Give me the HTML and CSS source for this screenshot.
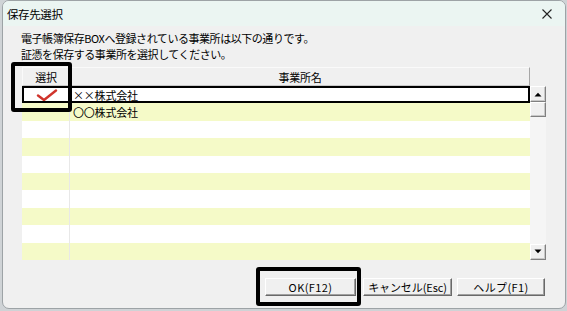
FILE: index.html
```html
<!DOCTYPE html>
<html lang="ja">
<head>
<meta charset="utf-8">
<link rel="stylesheet" href="styles.css">
</head>
<body>
<div class="window">
  <div class="titlebar">
    <span class="title">保存先選択</span>
    <svg class="close" width="12" height="12" viewBox="0 0 12 12"><path d="M1.5 1.5 L10.5 10.5 M10.5 1.5 L1.5 10.5" stroke="#222" stroke-width="1.1" fill="none"/></svg>
  </div>
  <div class="content">
    <div class="message">
      <div>電子帳簿保存BOXへ登録されている事業所は以下の通りです。</div>
      <div>証憑を保存する事業所を選択してください。</div>
    </div>
    <div class="grid">
      <div class="ghead">
        <div class="hcell c1">選択</div>
        <div class="hcell c2">事業所名</div>
      </div>
      <div class="gbody">
        <div class="rows">
          <div class="row sel">
            <div class="cell c1">
              <svg width="22" height="12" viewBox="0 0 22 12"><path d="M2 6.5 L8 11 L20 1.5" stroke="#d0342c" stroke-width="2.4" fill="none" stroke-linecap="round" stroke-linejoin="round"/></svg>
            </div>
            <div class="cell c2">××株式会社</div>
          </div>
          <div class="row alt"><div class="cell c1"></div><div class="cell c2">〇〇株式会社</div></div>
          <div class="row"><div class="cell c1"></div><div class="cell c2"></div></div>
          <div class="row alt"><div class="cell c1"></div><div class="cell c2"></div></div>
          <div class="row"><div class="cell c1"></div><div class="cell c2"></div></div>
          <div class="row alt"><div class="cell c1"></div><div class="cell c2"></div></div>
          <div class="row"><div class="cell c1"></div><div class="cell c2"></div></div>
          <div class="row alt"><div class="cell c1"></div><div class="cell c2"></div></div>
          <div class="row"><div class="cell c1"></div><div class="cell c2"></div></div>
          <div class="row alt"><div class="cell c1"></div><div class="cell c2"></div></div>
        </div>
        <div class="vscroll">
          <div class="sbtn"><svg width="8" height="5" viewBox="0 0 8 5"><path d="M0.5 4.5 L4 0.8 L7.5 4.5 Z" fill="#000"/></svg></div>
          <div class="thumb"></div>
          <div class="track"></div>
          <div class="sbtn"><svg width="8" height="5" viewBox="0 0 8 5"><path d="M0.5 0.5 L4 4.2 L7.5 0.5 Z" fill="#000"/></svg></div>
        </div>
      </div>
    </div>
    <div class="buttons">
      <div class="btn ok">OK(F12)</div>
      <div class="btn cancel">キャンセル(Esc)</div>
      <div class="btn help">ヘルプ(F1)</div>
    </div>
  </div>
  <div class="mark mark-sel"></div>
  <div class="mark mark-ok"></div>
</div>
</body>
</html>
```

FILE: styles.css
```css
html, body {
  margin: 0;
  padding: 0;
}
body {
  width: 567px;
  height: 311px;
  background: #cfd3d6;
  font-family: "Noto Sans CJK JP", "Noto Sans", sans-serif;
  color: #000;
  overflow: hidden;
}
.window {
  position: relative;
  margin: 0 0 0 2px;
  width: 562px;
  height: 307px;
  background: #f0f0f0;
  border: 1px solid #9da3a6;
  border-radius: 7px;
  overflow: hidden;
}
.titlebar {
  height: 25px;
  background: #ebf5f2;
  display: flex;
  align-items: center;
  justify-content: space-between;
  padding: 0 12px 0 4px;
}
.title {
  font-size: 11.5px;
  letter-spacing: -0.4px;
}
.close {
  display: block;
}
.content {
  padding: 4px 0 0 18px;
}
.message {
  font-size: 11px;
  letter-spacing: -0.45px;
  line-height: 16px;
}
.grid {
  margin-top: 5px;
  margin-left: 1px;
  width: 524px;
}
.ghead {
  display: flex;
  width: 508px;
  height: 19px;
}
.hcell {
  box-sizing: border-box;
  background: #f0f0f0;
  border-top: 1px solid #fafafa;
  border-left: 1px solid #fafafa;
  border-right: 1px solid #a6a6a6;
  border-bottom: 1px solid #c8c8c8;
  font-size: 11px;
  letter-spacing: -0.2px;
  display: flex;
  align-items: center;
  justify-content: center;
}
.hcell.c1 { width: 48px; }
.hcell.c2 { flex: 1; }
.gbody {
  display: flex;
}
.rows {
  width: 508px;
  display: flex;
  flex-direction: column;
}
.row {
  height: 17.4px;
  display: flex;
  background: #ffffff;
}
.row.alt {
  background: #f5fac8;
}
.row.sel {
  box-shadow: inset 0 0 0 2px #000;
}
.cell {
  box-sizing: border-box;
  font-size: 11px;
  letter-spacing: -0.2px;
  display: flex;
  align-items: center;
}
.cell.c1 {
  width: 48px;
  border-right: 1px solid #e8e8e8;
  justify-content: center;
}
.row.sel .cell.c1 {
  border-right: none;
  padding-left: 2px;
}
.cell.c2 {
  flex: 1;
  padding-left: 3px;
}
.vscroll {
  width: 16px;
  display: flex;
  flex-direction: column;
}
.sbtn, .thumb {
  box-sizing: border-box;
  background: #f0f0f0;
  border-top: 1px solid #ffffff;
  border-left: 1px solid #ffffff;
  border-right: 1px solid #808080;
  border-bottom: 1px solid #808080;
  box-shadow: inset -1px -1px 0 #c8c8c8;
  display: flex;
  align-items: center;
  justify-content: center;
}
.sbtn { height: 16px; }
.thumb { height: 15px; }
.track {
  flex: 1;
  background: #f5f5f5;
}
.buttons {
  display: flex;
  margin-top: 18px;
  margin-left: 244px;
}
.btn {
  box-sizing: border-box;
  height: 18px;
  background: #f0f0f0;
  border-top: 1px solid #ffffff;
  border-left: 1px solid #ffffff;
  border-right: 1px solid #696969;
  border-bottom: 1px solid #696969;
  box-shadow: inset -1px -1px 0 #a0a0a0;
  font-size: 11px;
  letter-spacing: 0.4px;
  display: flex;
  align-items: center;
  justify-content: center;
}
.btn.ok { width: 91px; }
.btn.cancel { width: 89px; margin-left: 7px; letter-spacing: -0.1px; }
.btn.help { width: 88px; margin-left: 5px; }
.mark {
  position: absolute;
  box-sizing: border-box;
  border: 4px solid #000;
  border-radius: 3px;
}
.mark-sel {
  left: 8px;
  top: 61px;
  width: 61px;
  height: 50px;
}
.mark-ok {
  left: 253px;
  top: 266px;
  width: 105px;
  height: 39px;
}
```
